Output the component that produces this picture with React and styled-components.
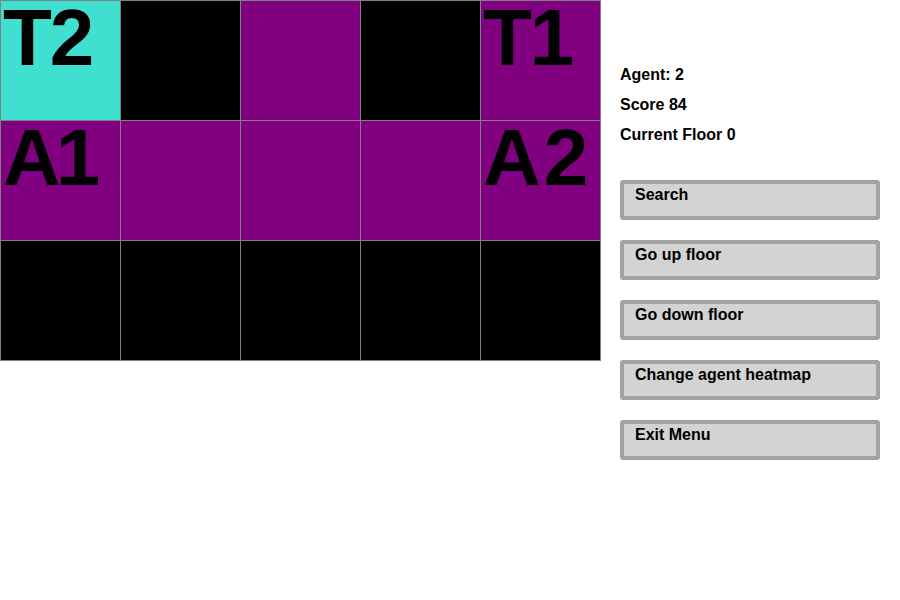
import { createGlobalStyle } from "styled-components";
import styled from "styled-components";

const GlobalStyle = createGlobalStyle`
  body {
    margin: 0;
    background: #ffffff;
    font-family: "Liberation Sans", Arial, sans-serif;
  }
`;

const COLORS = {
  teal: "#40e0d0",
  purple: "#800080",
  black: "#000000",
};

// one row per floor row, each cell: [colour, label]
const board = [
  [["teal", "T2"], ["black"], ["purple"], ["black"], ["purple", "T1"]],
  [["purple", "A1"], ["purple"], ["purple"], ["purple"], ["purple", "A2"]],
  [["black"], ["black"], ["black"], ["black"], ["black"]],
];

const buttons = [
  "Search",
  "Go up floor",
  "Go down floor",
  "Change agent heatmap",
  "Exit Menu",
];

const spacing = { A1: "-5px", A2: "3px", T1: "-2px", T2: "-2px" };

const Page = styled.div`
  display: flex;
  align-items: flex-start;
`;

const Board = styled.div`
  display: grid;
  grid-template-columns: repeat(5, 120px);
  grid-auto-rows: 120px;
  border-right: 1px solid #808080;
  border-bottom: 1px solid #808080;
  flex-shrink: 0;
`;

const Cell = styled.div`
  box-sizing: border-box;
  border-left: 1px solid #808080;
  border-top: 1px solid #808080;
  background: ${(p) => COLORS[p.$color]};
  padding: 1px 0 0 2px;
`;

const Label = styled.div`
  color: #000;
  font-family: "Liberation Sans", Arial, sans-serif;
  font-weight: bold;
  font-size: 80px;
  line-height: 72px;
  letter-spacing: ${(p) => spacing[p.children] || "0"};
  white-space: nowrap;
`;

const Sidebar = styled.div`
  padding: 60px 0 0 19px;
  display: flex;
  flex-direction: column;
`;

const Info = styled.div`
  font-size: 16px;
  font-weight: bold;
  line-height: 30px;
  color: #000;
`;

const Menu = styled.div`
  margin-top: 30px;
  display: flex;
  flex-direction: column;
  gap: 20px;
`;

const MenuButton = styled.div`
  box-sizing: border-box;
  width: 260px;
  height: 40px;
  border: 4px solid #a3a3a3;
  border-radius: 3px;
  background: #d3d3d3;
  padding: 1px 0 0 11px;
  font-size: 16px;
  font-weight: bold;
  line-height: 20px;
  color: #000;
`;

export default function App() {
  return (
    <>
      <GlobalStyle />
      <Page>
        <Board>
          {board.map((row, r) =>
            row.map(([color, label], c) => (
              <Cell key={`${r}-${c}`} $color={color}>
                {label && <Label>{label}</Label>}
              </Cell>
            ))
          )}
        </Board>
        <Sidebar>
          <Info>Agent: 2</Info>
          <Info>Score 84</Info>
          <Info>Current Floor 0</Info>
          <Menu>
            {buttons.map((b) => (
              <MenuButton key={b}>{b}</MenuButton>
            ))}
          </Menu>
        </Sidebar>
      </Page>
    </>
  );
}
